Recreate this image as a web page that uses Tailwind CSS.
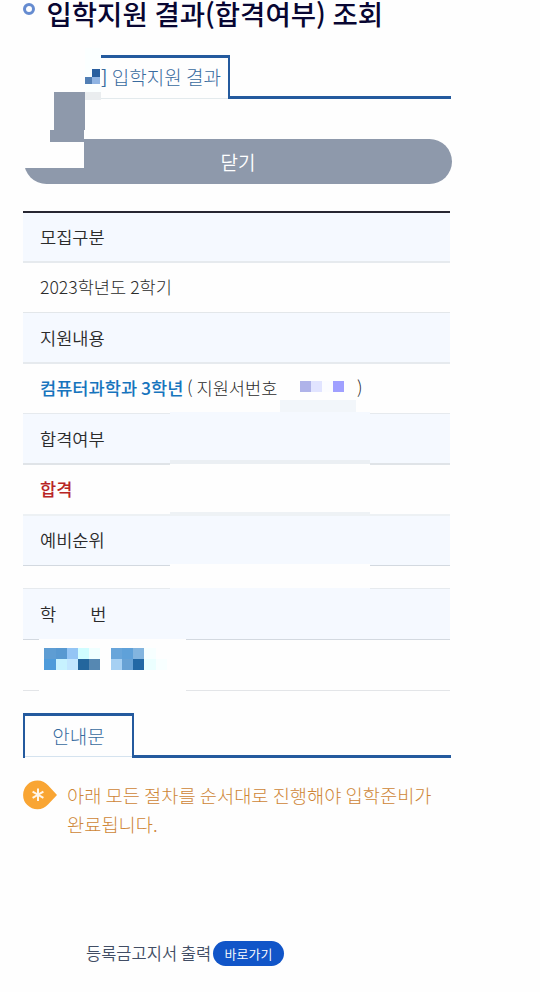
<!DOCTYPE html>
<html lang="ko">
<head>
  <meta charset="UTF-8" />
  <meta name="viewport" content="width=device-width, initial-scale=1.0" />
  <title>입학지원 결과(합격여부) 조회</title>
  <script src="https://cdn.jsdelivr.net/npm/@tailwindcss/browser@4"></script>
</head>
<body class="relative w-[540px] h-[992px] overflow-hidden bg-[#fefefe] font-['Noto_Sans_CJK_KR',sans-serif] text-[#2b2b2b] whitespace-nowrap">

  <!-- Title -->
  <header class="flex h-[55px] pl-[23px]">
    <span class="mt-[3px] w-3 h-3 rounded-full border-3 border-[#658bd0] shrink-0"></span>
    <h1 class="ml-[11.5px] text-[27.5px] leading-[26px] font-medium text-[#080632] [word-spacing:-1px]">입학지원 결과(합격여부) 조회</h1>
  </header>

  <!-- Result tab -->
  <section class="flex w-[427px] h-[44px] ml-6">
    <div class="w-[206px] h-[44px] border-t-3 border-r-2 border-[#245a9e] flex items-end">
      <div class="w-full h-[41px] border-b border-[#e3eaed] text-right pr-[7px] text-[19px] leading-[37px] font-light text-[#396b9f] [word-spacing:-1px]"><span class="font-normal">]</span> 입학지원 결과</div>
    </div>
    <div class="flex-1 border-b-3 border-[#245a9e]"></div>
  </section>

  <!-- Close button -->
  <button class="block mt-10 ml-6 w-[428px] h-[45px] rounded-full bg-[#8e99ab] text-center text-[19px] leading-[43px] text-white font-[350]">닫기</button>

  <!-- Application details -->
  <dl class="mt-[27px] ml-[23px] w-[427px] border-t-2 border-[#272632] text-[17.6px] leading-[48px]">
    <dt class="h-[50px] pl-[17px] bg-[#f5f9ff] border-b-2 border-[#e6eaee] font-[350]">모집구분</dt>
    <dd class="h-[50px] pl-[17px] border-b border-[#e3e7ea] font-light [word-spacing:-1px]">2023학년도 2학기</dd>
    <dt class="h-[51px] pl-[17px] leading-[50px] bg-[#f5f9ff] border-b-2 border-[#e6eaee] font-[350]">지원내용</dt>
    <dd class="h-[50px] pl-[17px] border-b border-[#e6eaee] font-light flex [word-spacing:-1px]">
      <strong class="w-[143px] font-medium text-[#1674bd]">컴퓨터과학과 3학년</strong>
      <span class="w-[90px] ml-1">( 지원서번호</span>
      <span class="ml-[80px]">)</span>
    </dd>
    <dt class="h-[51px] pl-[17px] leading-[50px] bg-[#f5f9ff] border-b-2 border-[#e0e4e8] font-[350]">합격여부</dt>
    <dd class="h-[51px] pl-[17px] border-b-2 border-[#edf1f4] font-medium text-[#b82525]">합격</dd>
    <dt class="h-[50px] pl-[17px] bg-[#f5f9ff] border-b border-[#d3d9e0] font-[350]">예비순위</dt>
    <dd class="h-[22px]"></dd>
    <dt class="h-[52px] pl-[17px] leading-[50px] bg-[#f5f9ff] border-t border-b border-t-[#e6eaee] border-b-[#d3d9e0] font-[350] flex"><span>학</span><span class="ml-[34px]">번</span></dt>
    <dd class="h-[51px] border-b border-[#e3e5e8]"></dd>
  </dl>

  <!-- Notice tab -->
  <section class="flex w-[428px] h-[45px] mt-[22px] ml-[23px]">
    <div class="w-[111px] h-[45px] border-t-3 border-x-2 border-[#245a9e]">
      <div class="h-[41px] border-b border-[#d5e3ef] text-center text-[19px] leading-[39px] font-light text-[#396b9f]">안내문</div>
    </div>
    <div class="flex-1 border-b-3 border-[#245a9e]"></div>
  </section>

  <!-- Notice -->
  <div class="flex ml-[23px] mt-[22px]">
    <svg class="w-[34px] h-[30px] shrink-0" viewBox="0 0 34 30">
      <path d="M14.5 0.5C19 0.5 22 2.2 25 5.2L34 15L25 24.5C22 27.5 19 29.3 14.5 29.3A14.4 14.4 0 0 1 14.5 0.5Z" fill="#f9a533" />
      <path d="M15 8.4V21M9.6 11.6L20.4 17.8M20.4 11.6L9.6 17.8" stroke="#fff5e8" stroke-width="2" fill="none" />
    </svg>
    <p class="ml-[10px] text-[18.7px] leading-[29px] font-light text-[#ce8636] [word-spacing:-1.1px]">아래 모든 절차를 순서대로 진행해야 입학준비가<br />완료됩니다.</p>
  </div>

  <!-- Tuition bill -->
  <div class="flex items-center mt-[103px] ml-[86px] h-[25px] text-[16.5px] text-[#414d64]">
    <span class="w-[127px] font-[350] [word-spacing:-1px]">등록금고지서 출력</span>
    <a href="#" class="w-[71px] h-[25px] rounded-full bg-[#1155c8] text-center text-[13px] leading-[25px] text-white font-[350]">바로가기</a>
  </div>

  <!-- Masked personal data -->
  <div class="absolute left-[20px] top-[48px] w-[65px] h-[55px] bg-[#fefefe]"></div>
  <div class="absolute left-[85px] top-[48px] w-4 h-11 bg-[#fbffff]"></div>
  <div class="absolute left-[92px] top-[69px] w-2 h-2 bg-[#285f9f]"></div>
  <div class="absolute left-[85px] top-[77px] w-[7px] h-[7px] bg-[#527fb5]"></div>
  <div class="absolute left-[92px] top-[77px] w-2 h-[7px] bg-[#8fb4e3]"></div>
  <div class="absolute left-[85px] top-[92px] w-4 h-2 bg-[#eaedef]"></div>
  <div class="absolute left-[54px] top-[92px] w-[31px] h-[38px] bg-[#8e99ab]"></div>
  <div class="absolute left-[20px] top-[130px] w-[64px] h-[38px] bg-[#fefefe]"></div>
  <div class="absolute left-[50px] top-[130px] w-[34px] h-[12px] bg-[#8e99ab]"></div>

  <div class="absolute left-[300px] top-[381px] flex h-[11px]">
    <span class="w-[11px] bg-[#afb3e9]"></span>
    <span class="w-[11px] bg-[#e1e4ff]"></span>
    <span class="w-[11px] bg-[#fbfcff]"></span>
    <span class="w-[11px] bg-[#a0a0ff]"></span>
  </div>
  <div class="absolute left-[280px] top-[400px] w-[76px] h-3 bg-[#f2f6fa]"></div>
  <div class="absolute left-[170px] top-[412px] w-[200px] h-[48px] bg-[#f5f9ff]"></div>
  <div class="absolute left-[170px] top-[460px] w-[200px] h-1 bg-[#ebeff3]"></div>
  <div class="absolute left-[170px] top-[464px] w-[200px] h-[48px] bg-[#fefefe]"></div>
  <div class="absolute left-[170px] top-[512px] w-[200px] h-1 bg-[#eef2f5]"></div>
  <div class="absolute left-[170px] top-[564px] w-[200px] h-6 bg-[#fefefe]"></div>
  <div class="absolute left-[170px] top-[588px] w-[200px] h-2 bg-[#f5f9ff]"></div>

  <div class="absolute left-[39px] top-[639px] w-[147px] h-[56px] bg-[#fefefe]"></div>
  <div class="absolute left-[44px] top-[648px] grid grid-cols-[12px_11px_11px_11px_11px] grid-rows-[11px_11px]">
    <span class="bg-[#5e9dd3]"></span>
    <span class="bg-[#5899d1]"></span>
    <span class="bg-[#94c5f5]"></span>
    <span class="bg-[#d0fdff]"></span>
    <span class="bg-[#f0ffff]"></span>
    <span class="bg-[#4e9bda]"></span>
    <span class="bg-[#c7f2ff]"></span>
    <span class="bg-[#c2e6ff]"></span>
    <span class="bg-[#24669d]"></span>
    <span class="bg-[#5688b2]"></span>
  </div>
  <div class="absolute left-[111px] top-[648px] grid grid-cols-[11px_11px_11px_12px_11px] grid-rows-[11px_11px]">
    <span class="bg-[#68a5da]"></span>
    <span class="bg-[#5fa1d9]"></span>
    <span class="bg-[#83b5df]"></span>
    <span class="bg-[#f7ffff]"></span>
    <span class="bg-[#fefefe]"></span>
    <span class="bg-[#a6d0f3]"></span>
    <span class="bg-[#68a2d5]"></span>
    <span class="bg-[#2268a5]"></span>
    <span class="bg-[#ebffff]"></span>
    <span class="bg-[#f8ffff]"></span>
  </div>
</body>
</html>
